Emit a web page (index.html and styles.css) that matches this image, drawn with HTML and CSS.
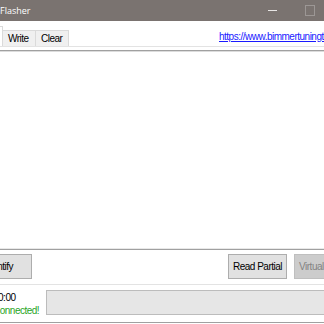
FILE: index.html
```html
<!DOCTYPE html>
<html lang="en">
    <head>
        <meta charset="UTF-8">
        <title>Flasher</title>
        <link rel="stylesheet" href="styles.css">
    </head>
    <body>
        <div class="app">
            <div class="titlebar">
                <span class="title">Flasher</span>
                <div class="controls">
                    <span class="min_btn"></span>
                    <span class="max_btn"></span>
                </div>
            </div>
            <div class="tabbar">
                <div class="tab tab_active"></div>
                <div class="tab">Write</div>
                <div class="tab">Clear</div>
                <a class="site_link" href="#">https://www.bimmertuningtools.com</a>
            </div>
            <div class="panel"></div>
            <div class="actions">
                <button class="btn btn_identify">Identify</button>
                <button class="btn btn_read">Read Partial</button>
                <button class="btn btn_virtual" disabled>Virtual Read</button>
            </div>
            <div class="status">
                <div class="status_text">
                    <span class="timer">00:00</span>
                    <span class="connected">Connected!</span>
                </div>
                <div class="progress"></div>
            </div>
        </div>
    </body>
</html>
```

FILE: styles.css
```css
body {
    margin: 0;
    background: #ffffff;
}
.app {
    width: 324px;
    height: 324px;
    overflow: hidden;
    display: flex;
    flex-direction: column;
    font-family: "Liberation Sans", Arial, sans-serif;
    font-size: 10px;
    letter-spacing: -0.5px;
    color: #000000;
    background: #ffffff;
}
.titlebar {
    height: 21px;
    flex-shrink: 0;
    display: flex;
    align-items: center;
    background: #7a7370;
    color: #ffffff;
}
.title {
    font-family: "Open Sans", "Noto Sans", sans-serif;
    font-size: 9px;
    letter-spacing: 0;
}
.controls {
    margin-left: auto;
    display: flex;
    align-items: center;
    padding-right: 9px;
}
.min_btn {
    width: 9px;
    height: 1px;
    background: #e8e6e5;
}
.max_btn {
    width: 8px;
    height: 9px;
    border: 1px solid #9c9795;
    margin-left: 28px;
}
.tabbar {
    height: 26px;
    box-sizing: border-box;
    flex-shrink: 0;
    display: flex;
    align-items: flex-end;
    border-bottom: 1px solid #e3e3e3;
    margin-bottom: 3px;
    white-space: nowrap;
}
.tab {
    flex-shrink: 0;
    height: 15px;
    line-height: 16px;
    padding: 0 0 0 5px;
    width: 27px;
    background: #f0f0f0;
    border: 1px solid #dadada;
    border-bottom: none;
    margin-left: -1px;
}
.tab_active {
    width: 0;
    height: 19px;
    padding: 0 0 0 2px;
    margin-left: 0;
    background: #ffffff;
    border-left: none;
}
.site_link {
    flex-shrink: 0;
    margin-left: 150px;
    align-self: center;
    margin-top: 6px;
    color: #1a1aff;
    text-decoration: underline;
}
.panel {
    height: 200px;
    box-sizing: border-box;
    flex-shrink: 0;
    border-top: 1px solid #a0a0a0;
    border-bottom: 1px solid #a0a0a0;
    box-shadow: inset 0 1px 0 #dcdcdc, inset 0 -1px 0 #e8e8e8;
}
.actions {
    height: 35px;
    flex-shrink: 0;
    display: flex;
    align-items: flex-start;
    padding-top: 4px;
    box-sizing: border-box;
    border-bottom: 1px solid #e3e3e3;
}
.btn {
    flex-shrink: 0;
    height: 25px;
    padding: 0;
    font-family: "Liberation Sans", Arial, sans-serif;
    font-size: 10px;
    letter-spacing: -0.5px;
    color: #000000;
    background: #e1e1e1;
    border: 1px solid #adadad;
    white-space: nowrap;
}
.btn_identify {
    width: 66px;
    margin-left: -34px;
}
.btn_read {
    width: 59px;
    margin-left: auto;
}
.btn_virtual {
    width: 59px;
    margin-left: 7px;
    margin-right: -29px;
    background: #cccccc;
    border-color: #bfbfbf;
    color: #838383;
}
.status {
    height: 38px;
    box-sizing: border-box;
    flex-shrink: 0;
    display: flex;
    align-items: flex-start;
    padding-top: 5px;
    border-bottom: 1px solid #a0a0a0;
}
.status_text {
    width: 53px;
    flex-shrink: 0;
    margin-left: -7px;
    display: flex;
    flex-direction: column;
    padding-top: 1px;
    white-space: nowrap;
}
.timer {
    line-height: 13px;
}
.connected {
    color: #1fa51f;
    line-height: 13px;
}
.progress {
    flex-shrink: 0;
    width: 300px;
    height: 25px;
    box-sizing: border-box;
    background: #e6e6e6;
    border: 1px solid #bcbcbc;
}
```
